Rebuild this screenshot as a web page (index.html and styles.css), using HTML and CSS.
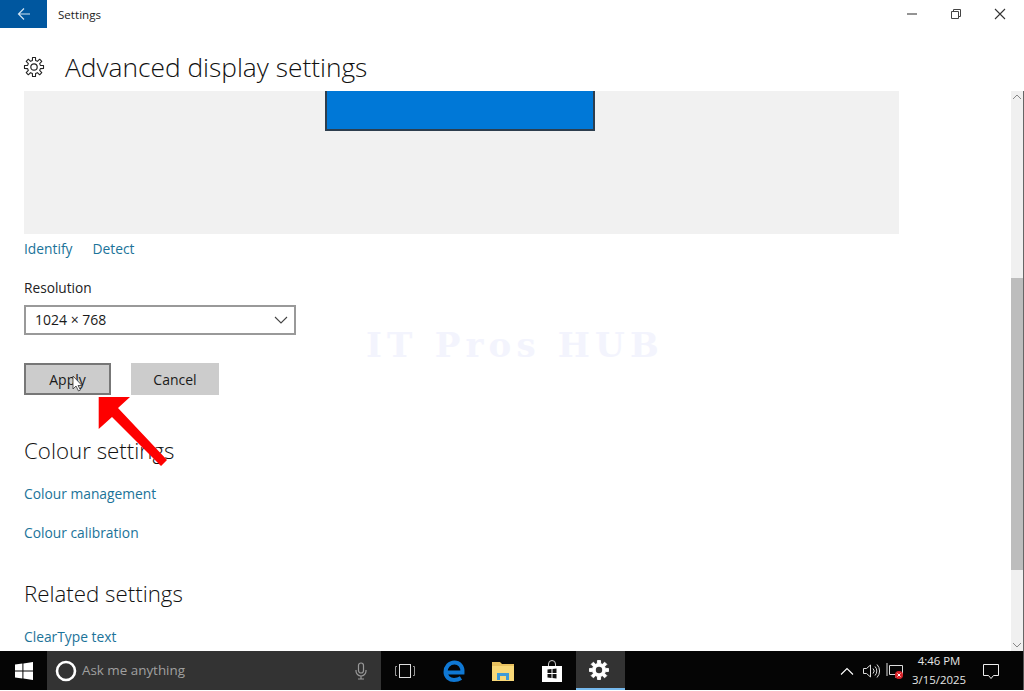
FILE: index.html

```html
<!DOCTYPE html>
<html lang="en">
<head>
    <meta charset="UTF-8">
    <title>Settings</title>
    <link rel="stylesheet" href="styles.css">
</head>
<body>
    <svg class="defs" width="0" height="0">
        <symbol id="gear" viewBox="-12 -12 24 24">
            <polygon points="6.98,-1.75 10.37,-1.64 10.37,1.64 6.98,1.75 6.17,3.71 8.49,6.17 6.17,8.49 3.71,6.17 1.75,6.98 1.64,10.37 -1.64,10.37 -1.75,6.98 -3.71,6.17 -6.17,8.49 -8.49,6.17 -6.17,3.71 -6.98,1.75 -10.37,1.64 -10.37,-1.64 -6.98,-1.75 -6.17,-3.71 -8.49,-6.17 -6.17,-8.49 -3.71,-6.17 -1.75,-6.98 -1.64,-10.37 1.64,-10.37 1.75,-6.98 3.71,-6.17 6.17,-8.49 8.49,-6.17 6.17,-3.71"/>
        </symbol>
    </svg>

    <div class="window">
        <div class="titlebar">
            <div class="back-btn">
                <svg width="14" height="14" viewBox="0 0 14 14" fill="none" stroke="#cfe3f2" stroke-width="1.2"><path d="M13 7H1.5M7 1.5 1.5 7 7 12.5"/></svg>
            </div>
            <span class="app-name">Settings</span>
            <div class="win-btns">
                <div class="win-btn"><svg width="12" height="12" viewBox="0 0 12 12"><path d="M1 6h10" stroke="#666" stroke-width="1.4"/></svg></div>
                <div class="win-btn"><svg width="12" height="12" viewBox="0 0 12 12" fill="none" stroke="#444"><path d="M1.5 3.5h7v7h-7zM3.5 3.5v-2h7v7h-2"/></svg></div>
                <div class="win-btn"><svg width="12" height="12" viewBox="0 0 12 12" fill="none" stroke="#333" stroke-width="1.1"><path d="M1 1l10 10M11 1 1 11"/></svg></div>
            </div>
        </div>

        <div class="page-head">
            <svg class="head-gear" width="22" height="22"><use href="#gear"/><circle cx="11" cy="11" r="3.2"/></svg>
            <h1>Advanced display settings</h1>
        </div>

        <div class="body-row">
            <div class="content">
                <div class="preview">
                    <div class="monitor"></div>
                </div>
                <div class="link-row">
                    <a class="link">Identify</a>
                    <a class="link">Detect</a>
                </div>
                <div class="field-label">Resolution</div>
                <div class="select">
                    <span>1024 × 768</span>
                    <svg width="14" height="8" viewBox="0 0 14 8" fill="none" stroke="#444" stroke-width="1.1"><path d="M1 1l6 6 6-6"/></svg>
                </div>
                <div class="btn-row">
                    <div class="btn btn-focus">Apply</div>
                    <div class="btn btn-cancel">Cancel</div>
                </div>
                <h2>Colour settings</h2>
                <a class="link block-link">Colour management</a>
                <a class="link block-link">Colour calibration</a>
                <h2 class="related">Related settings</h2>
                <a class="link block-link">ClearType text</a>
            </div>
            <div class="scrollbar">
                <svg class="sb-arrow" width="10" height="6" viewBox="0 0 10 6" fill="none" stroke="#888"><path d="M1 5l4-4 4 4"/></svg>
                <div class="sb-gap-top"></div>
                <div class="sb-thumb"></div>
                <div class="sb-gap-bottom"></div>
                <svg class="sb-arrow" width="10" height="6" viewBox="0 0 10 6" fill="none" stroke="#888"><path d="M1 1l4 4 4-4"/></svg>
            </div>
        </div>
    </div>

    <div class="taskbar">
        <div class="start">
            <svg width="18" height="18" viewBox="0 0 18 18" fill="#fff"><path d="M0 2.6 7.4 1.5v7H0zM8.400 1.400 18 0v8.500H8.400zM0 9.500h7.400v7L0 15.400zM8.400 9.500H18V18l-9.600-1.400z"/></svg>
        </div>
        <div class="search">
            <svg width="22" height="22" viewBox="0 0 22 22" fill="none" stroke="#fff" stroke-width="2.600"><circle cx="11" cy="11" r="9"/></svg>
            <span class="search-text">Ask me anything</span>
            <svg class="mic" width="12" height="18" viewBox="0 0 12 18" fill="none" stroke="#999" stroke-width="1.200"><rect x="3.500" y="1" width="5" height="10" rx="2.500"/><path d="M1 8v1a5 5 0 0 0 10 0V8M6 14v3M3 17h6"/></svg>
        </div>
        <div class="task-btn">
            <svg width="20" height="14" viewBox="0 0 20 14" fill="none" stroke="#ddd"><rect x="4.500" y="0.500" width="11" height="13"/><path d="M2 2.500H.5v9H2M18 2.500h1.500v9H18" stroke="#999"/></svg>
        </div>
        <div class="task-btn">
            <svg width="22" height="22" viewBox="0 0 22 22" fill="none" stroke="#0f78d4" stroke-width="4"><path d="M3 12.500h16.500C20 6 16 2.500 11.500 2.500 6 2.500 2.500 7 2.500 12c0 5 4 8 8.500 8 2.500 0 5-.7 7-2"/></svg>
        </div>
        <div class="task-btn">
            <svg width="22" height="20" viewBox="0 0 22 20"><path d="M0 1h8l2 2h12v3H0z" fill="#e8c15f"/><path d="M0 5h22v15H0z" fill="#f8d878"/><path d="M5 19v-7h12v7h-3v-4H8v4z" fill="#3f9bd8"/></svg>
        </div>
        <div class="task-btn">
            <svg width="20" height="22" viewBox="0 0 20 22"><path d="M6.500 6V4a3.500 3.500 0 0 1 7 0v2" fill="none" stroke="#ccc"/><path d="M0 6h20v16H0z" fill="#fff"/><path d="M5.500 9.500l4-.5v4h-4zM10.500 8.900l4-.5V13h-4zM5.500 14h4v4l-4-.5zM10.500 14h4v4.600l-4-.5z" fill="#111"/></svg>
        </div>
        <div class="task-btn task-active">
            <svg width="22" height="22" class="task-gear"><use href="#gear"/><circle cx="11" cy="11" r="3.200"/></svg>
        </div>
        <div class="tray">
            <div class="tray-item">
                <svg width="14" height="8" viewBox="0 0 14 8" fill="none" stroke="#fff" stroke-width="1.100"><path d="M1 7.500l6-6 6 6"/></svg>
            </div>
            <div class="tray-item">
                <svg width="17" height="14" viewBox="0 0 17 14" fill="none" stroke="#ddd"><path d="M.5 4.500h3l4-3.500v12l-4-3.500h-3zM10 4.500a3.500 3.500 0 0 1 0 5M12 2.500a6.500 6.500 0 0 1 0 9M14 .5a9.500 9.500 0 0 1 0 13"/></svg>
            </div>
            <div class="tray-item">
                <svg width="18" height="18" viewBox="0 0 18 18" fill="none" stroke="#ddd"><path d="M3.500 3.500h13v9h-13zM1 1v13M9 15h3"/><circle cx="13" cy="13" r="4" fill="#d8232a" stroke="none"/><path d="M11.500 11.500l3 3M14.500 11.500l-3 3" stroke="#fff"/></svg>
            </div>
            <div class="clock">
                <span>4:46 PM</span>
                <span>3/15/2025</span>
            </div>
            <div class="tray-item tray-notify">
                <svg width="16" height="16" viewBox="0 0 16 16" fill="none" stroke="#eee"><path d="M.5 1.500h15v11h-5l-2.500 3-2.500-3h-5z"/></svg>
            </div>
            <div class="show-desktop"></div>
        </div>
    </div>

    <!-- things drawn over the page in the recording -->
    <div class="watermark">IT Pros HUB</div>
    <svg class="red-arrow" width="85" height="85" viewBox="90 390 85 85" fill="#fe0000"><path d="M98.700 397H130L118 408 167 460 161 466 112 417 98.700 429z"/></svg>
    <svg class="cursor" width="12" height="18" viewBox="0 0 12 18" fill="#fff" stroke="#333" stroke-width=".8"><path d="M1 1v13l3-3 2.500 5 2-1-2.500-4.500h4z"/></svg>
</body>
</html>
```

FILE: styles.css

```css
* {
    box-sizing: border-box;
}
html, body {
    margin: 0;
    height: 691px;
    overflow: hidden;
}
body {
    font-family: "Open Sans", "Noto Sans", Arial, sans-serif;
    background: #fff;
    color: #1a1a1a;
    display: flex;
    flex-direction: column;
    position: relative;
}
.defs {
    position: absolute;
}
.window {
    height: 651px;
    display: flex;
    flex-direction: column;
}
.titlebar {
    height: 28px;
    display: flex;
    align-items: center;
    flex-shrink: 0;
}
.back-btn {
    width: 47px;
    height: 28px;
    background: #00579f;
    display: flex;
    align-items: center;
    justify-content: center;
}
.app-name {
    margin-left: 11px;
    font-size: 11.600px;
    color: #222;
}
.win-btns {
    margin-left: auto;
    margin-right: 2px;
    display: flex;
}
.win-btn {
    width: 44px;
    height: 28px;
    display: flex;
    align-items: center;
    justify-content: center;
}
.page-head {
    height: 63px;
    flex-shrink: 0;
    display: flex;
    align-items: center;
    padding: 14px 0 0 23px;
}
.head-gear {
    fill: none;
    stroke: #222;
    stroke-width: 1.200;
    stroke-linejoin: round;
}
h1 {
    margin: 0 0 0 20px;
    font-size: 26.300px;
    font-weight: 300;
    color: #111;
}
.body-row {
    flex: 1;
    display: flex;
    min-height: 0;
}
.content {
    flex: 1;
    padding-left: 24px;
    overflow: hidden;
}
.preview {
    width: 875px;
    height: 143px;
    background: #f1f1f1;
    display: flex;
    justify-content: center;
    padding-right: 3px;
}
.monitor {
    width: 270px;
    height: 40px;
    background: #0078d7;
    border: 2px solid #2d3e4e;
    border-top: 0;
}
.link {
    color: #1b7399;
    font-size: 13.800px;
}
.link-row {
    display: flex;
    gap: 20px;
    margin-top: 5px;
    height: 20px;
}
.field-label {
    margin-top: 19px;
    font-size: 13.700px;
    line-height: 20px;
    color: #222;
}
.select {
    margin-top: 7px;
    width: 272px;
    height: 30px;
    border: 2px solid #999;
    padding: 0 6px 0 9px;
    display: flex;
    align-items: center;
    justify-content: space-between;
    font-size: 14px;
}
.select span {
    padding-bottom: 2px;
}
.btn-row {
    display: flex;
    gap: 20px;
    margin-top: 28px;
}
.btn {
    width: 88px;
    height: 32px;
    background: #ccc;
    display: flex;
    align-items: center;
    justify-content: center;
    font-size: 14px;
}
.btn-focus {
    width: 87px;
    border: 2px solid #777;
}
h2 {
    margin: 41px 0 0;
    font-size: 22.300px;
    font-weight: 300;
    line-height: 30px;
    color: #111;
}
.block-link {
    display: block;
    line-height: 20px;
    margin-top: 19px;
}
h2 + .block-link {
    margin-top: 18px;
}
h2.related {
    margin-top: 36px;
}
.scrollbar {
    width: 13px;
    background: #f0f0f0;
    border-right: 1px solid #666;
    display: flex;
    flex-direction: column;
    align-items: center;
}
.sb-arrow {
    flex-shrink: 0;
    margin: 3px 0;
}
.sb-gap-top {
    height: 175px;
}
.sb-thumb {
    width: 100%;
    height: 292px;
    background: #bdbdbd;
}
.sb-gap-bottom {
    flex: 1;
}
.taskbar {
    height: 39px;
    flex-shrink: 0;
    background: #050505;
    display: flex;
    color: #fff;
}
.start {
    width: 47px;
    display: flex;
    align-items: center;
    justify-content: center;
}
.search {
    width: 334px;
    background: #333;
    display: flex;
    align-items: center;
    padding-left: 8px;
    gap: 5px;
}
.search-text {
    font-size: 13.400px;
    color: #a0a0a0;
    padding-bottom: 2px;
}
.mic {
    margin-left: auto;
    margin-right: 14px;
}
.task-btn {
    width: 48.750px;
    display: flex;
    align-items: center;
    justify-content: center;
}
.task-active {
    background: #333;
    border-bottom: 2px solid #76b9ed;
}
.task-gear {
    fill: #fff;
    stroke: #fff;
    stroke-linejoin: round;
    margin-right: 2px;
}
.task-gear circle {
    fill: #333;
    stroke: none;
}
.tray {
    margin-left: auto;
    display: flex;
}
.tray-item {
    width: 24px;
    display: flex;
    align-items: center;
    justify-content: center;
}
.clock {
    width: 64px;
    display: flex;
    flex-direction: column;
    align-items: center;
    justify-content: center;
    font-size: 11.400px;
    line-height: 19px;
    color: #e6e6e6;
    padding-bottom: 1px;
}
.tray-notify {
    width: 40px;
}
.show-desktop {
    width: 13px;
    border-right: 1px solid #555;
}
.watermark {
    position: absolute;
    left: 366px;
    top: 325px;
    font-family: "DejaVu Serif", serif;
    font-weight: bold;
    font-size: 34px;
    line-height: 40px;
    letter-spacing: 5.200px;
    white-space: nowrap;
    color: #f3f4fd;
}
.red-arrow {
    position: absolute;
    left: 90px;
    top: 390px;
}
.cursor {
    position: absolute;
    left: 72px;
    top: 375px;
}
```
